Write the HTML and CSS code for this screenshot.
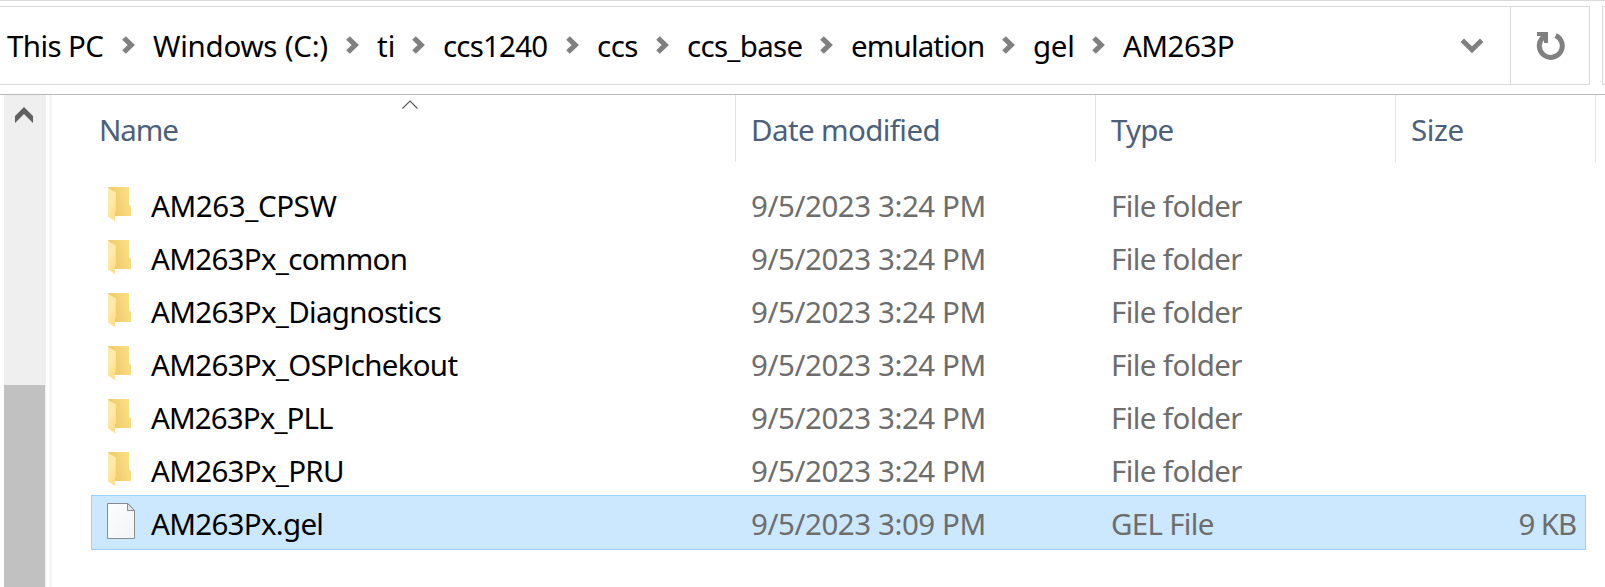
FILE: index.html
```
<!DOCTYPE html>
<html lang="en">
<head>
<meta charset="utf-8">
<title>AM263P</title>
<link rel="stylesheet" href="styles.css">
</head>
<body>
<svg class="defs" width="0" height="0">
  <defs>
    <linearGradient id="back" x1="0" y1="0.6" x2="1" y2="0.3"><stop offset="0" stop-color="#ebc665"/><stop offset="1" stop-color="#fde085"/></linearGradient>
    <linearGradient id="flap" x1="0" y1="0" x2="0.4" y2="1"><stop offset="0" stop-color="#ffe9a6"/><stop offset="0.5" stop-color="#ffeaaa"/><stop offset="1" stop-color="#ffdf88"/></linearGradient>
    <linearGradient id="sheet" x1="0" y1="0" x2="1" y2="1"><stop offset="0" stop-color="#fcfdfd"/><stop offset="1" stop-color="#f2f4f6"/></linearGradient>
  </defs>
  <symbol id="chev" viewBox="0 0 13 18"><path d="M2 2 9.200 9 2 16" fill="none" stroke="#808080" stroke-width="5.200"/></symbol>
  <symbol id="folder" viewBox="0 0 24 35">
    <path d="M0 0H21V17L23 19.500V29H7V12Z" fill="url(#back)"/>
    <path d="M7 33.500 10 33.800 7.500 34.500Z" fill="#eee6d8"/>
    <path d="M0 1 7.800 5.300V24.800L7 25.500V34L0 29.500Z" fill="url(#flap)"/>
  </symbol>
  <symbol id="file" viewBox="0 0 28 36">
    <path d="M.5 .5H21L27.500 7.500V35.500H.5Z" fill="url(#sheet)" stroke="#888c90"/>
    <path d="M20.500 .5V7.500H27.500Z" fill="#e3e6e8" stroke="#888c90"/>
  </symbol>
</svg>
<div class="window">
  <header class="toolbar">
    <div class="address">
      <nav class="crumbs">
        <span class="crumb"><span class="t this-pc">This PC</span><svg class="chev"><use href="#chev"/></svg></span>
        <span class="crumb"><span class="t drive">Windows (C:)</span><svg class="chev"><use href="#chev"/></svg></span>
        <span class="crumb"><span class="t ti">ti</span><svg class="chev"><use href="#chev"/></svg></span>
        <span class="crumb"><span class="t ccs1240">ccs1240</span><svg class="chev"><use href="#chev"/></svg></span>
        <span class="crumb"><span class="t ccs">ccs</span><svg class="chev"><use href="#chev"/></svg></span>
        <span class="crumb"><span class="t ccs-base">ccs_base</span><svg class="chev"><use href="#chev"/></svg></span>
        <span class="crumb"><span class="t emulation">emulation</span><svg class="chev"><use href="#chev"/></svg></span>
        <span class="crumb"><span class="t gel">gel</span><svg class="chev"><use href="#chev"/></svg></span>
        <span class="crumb"><span class="t current">AM263P</span></span>
      </nav>
      <svg class="drop" viewBox="0 0 24 16"><path d="M2.300 2.300 12 11.700 21.700 2.300" fill="none" stroke="#808080" stroke-width="5"/></svg>
      <div class="refresh"><svg viewBox="0 0 30 30" width="30" height="30"><path d="M7.700 6.700A11.500 11.500 0 1 0 20.700 4.500" fill="none" stroke="#808080" stroke-width="5"/><path d="M2 1H13V12H9V8.500L5.500 5H2Z" fill="#808080"/></svg></div>
    </div>
    <div class="search"></div>
  </header>
  <main class="body">
    <div class="scrollbar">
      <svg class="up" viewBox="0 0 18 16"><path d="M0 9 9 0 18 9V16L9 7 0 16Z" fill="#606060"/></svg>
      <div class="thumb"></div>
    </div>
    <div class="splitter"></div>
    <section class="list">
      <div class="head">
        <div class="cell h-name"><span class="t name">Name</span><svg class="sort" viewBox="0 0 16 9"><path d="M.5 8.500 8 1 15.500 8.500" fill="none" stroke="#555" stroke-width="1.100"/></svg></div>
        <div class="cell"><span class="t modified">Date modified</span></div>
        <div class="cell"><span class="t type">Type</span></div>
        <div class="cell"><span class="t size">Size</span></div>
      </div>
      <div class="rows">
        <div class="row"><svg class="icon"><use href="#folder"/></svg><span class="t cpsw">AM263_CPSW</span><span class="t date">9/5/2023 3:24 PM</span><span class="t kind">File folder</span></div>
        <div class="row"><svg class="icon"><use href="#folder"/></svg><span class="t common">AM263Px_common</span><span class="t date">9/5/2023 3:24 PM</span><span class="t kind">File folder</span></div>
        <div class="row"><svg class="icon"><use href="#folder"/></svg><span class="t diag">AM263Px_Diagnostics</span><span class="t date">9/5/2023 3:24 PM</span><span class="t kind">File folder</span></div>
        <div class="row"><svg class="icon"><use href="#folder"/></svg><span class="t ospi">AM263Px_OSP<i>I</i>chekout</span><span class="t date">9/5/2023 3:24 PM</span><span class="t kind">File folder</span></div>
        <div class="row"><svg class="icon"><use href="#folder"/></svg><span class="t pll">AM263Px_PLL</span><span class="t date">9/5/2023 3:24 PM</span><span class="t kind">File folder</span></div>
        <div class="row"><svg class="icon"><use href="#folder"/></svg><span class="t pru">AM263Px_PRU</span><span class="t date">9/5/2023 3:24 PM</span><span class="t kind">File folder</span></div>
        <div class="row selected"><svg class="icon sheet"><use href="#file"/></svg><span class="t gelfile">AM263Px.gel</span><span class="t date">9/5/2023 3:09 PM</span><span class="t kind gelkind">GEL File</span><span class="t kb">9 KB</span></div>
      </div>
    </section>
  </main>
</div>
</body>
</html>
```
FILE: styles.css
```
* { box-sizing: border-box; }
body {
  margin: 0;
  width: 1605px;
  height: 587px;
  overflow: hidden;
  background: #fff;
  color: #000;
  font-family: "Noto Sans", "Open Sans", sans-serif;
  font-size: 29.5px;
  line-height: 40px;
}
svg { display: block; flex: none; }
.defs { position: absolute; }
.t { font-weight: 380; white-space: nowrap; letter-spacing: -0.7px; }
.t i { font-family: "Open Sans", sans-serif; font-style: normal; }

.window { display: flex; flex-direction: column; height: 587px; border-top: 1px solid #d9d9d9; }
.toolbar { display: flex; gap: 12px; height: 94px; padding: 5px 0 9px; border-bottom: 1px solid #b9b9b9; }
.address { display: flex; align-items: center; width: 1590px; height: 79px; border: 1px solid #d9d9d9; border-left: 0; }
.crumbs {
  display: grid;
  grid-template-columns: 146px 224px 66px 154px 90px 164px 182px 90px 140px;
  flex: 1;
  padding-left: 7px;
}
.crumb { display: flex; align-items: center; justify-content: space-between; padding-right: 18px; }
.chev { width: 13px; height: 18px; margin-top: -2px; }
.drop { width: 24px; height: 16px; margin: 0 26px 0 0; }
.refresh { display: flex; align-items: center; justify-content: center; width: 79px; height: 77px; border-left: 1px solid #d9d9d9; }
.search { flex: 1; height: 79px; border: 1px solid #d9d9d9; border-right: 0; }

.this-pc { letter-spacing: -0.6px; }
.drive { letter-spacing: -0.25px; }
.ti { letter-spacing: 0; }
.ccs1240 { letter-spacing: -0.8px; }
.ccs, .current { letter-spacing: -0.5px; }
.ccs-base { letter-spacing: -0.7px; }
.emulation { letter-spacing: -0.85px; }
.gel { letter-spacing: -0.3px; }
.name { letter-spacing: -1.1px; }
.type { letter-spacing: -0.8px; }
.modified { letter-spacing: -0.6px; }
.size { letter-spacing: -0.4px; }
.cpsw { letter-spacing: -0.4px; }
.pll { letter-spacing: -0.9px; }
.date { letter-spacing: -0.43px; }
.kind { letter-spacing: -0.6px; }
.gelkind { letter-spacing: -0.7px; }
.kb { letter-spacing: -1.1px; }

.body { display: flex; flex: 1; padding-left: 4px; }
.scrollbar { display: flex; flex-direction: column; width: 42px; background: #efefef; }
.up { width: 18px; height: 16px; margin: 12px 0 0 11px; }
.thumb { width: 41px; flex: 1; margin-top: 262px; background: #c1c1c1; }
.splitter { width: 3px; margin-left: 3px; background: #f5f5f5; }
.list { flex: 1; }
.head { display: grid; grid-template-columns: 684px 360px 300px 200px; height: 67px; color: #4c607a; }
.cell { border-right: 1px solid #e3e3e3; padding: 15px 0 0 15px; position: relative; }
.h-name { padding-left: 47px; }
.sort { position: absolute; left: 350px; top: 5px; width: 16px; height: 9px; }
.rows { margin: 15px 0 0 39px; }
.row {
  display: grid;
  grid-template-columns: 43px 600px 360px 340px 1fr;
  align-items: start;
  width: 1495px;
  height: 55px;
  margin-bottom: -2px;
  padding: 8px 9px 0 16px;
  border: 1px solid transparent;
}
.row.selected { background: #cce8ff; border-color: #99d1ff; }
.icon { width: 24px; height: 35px; margin-top: 1px; }
.sheet { width: 28px; height: 36px; margin: -1px 0 0 -1px; }
.date, .kind, .kb { color: #6d6d6d; }
.kb { text-align: right; }
```
